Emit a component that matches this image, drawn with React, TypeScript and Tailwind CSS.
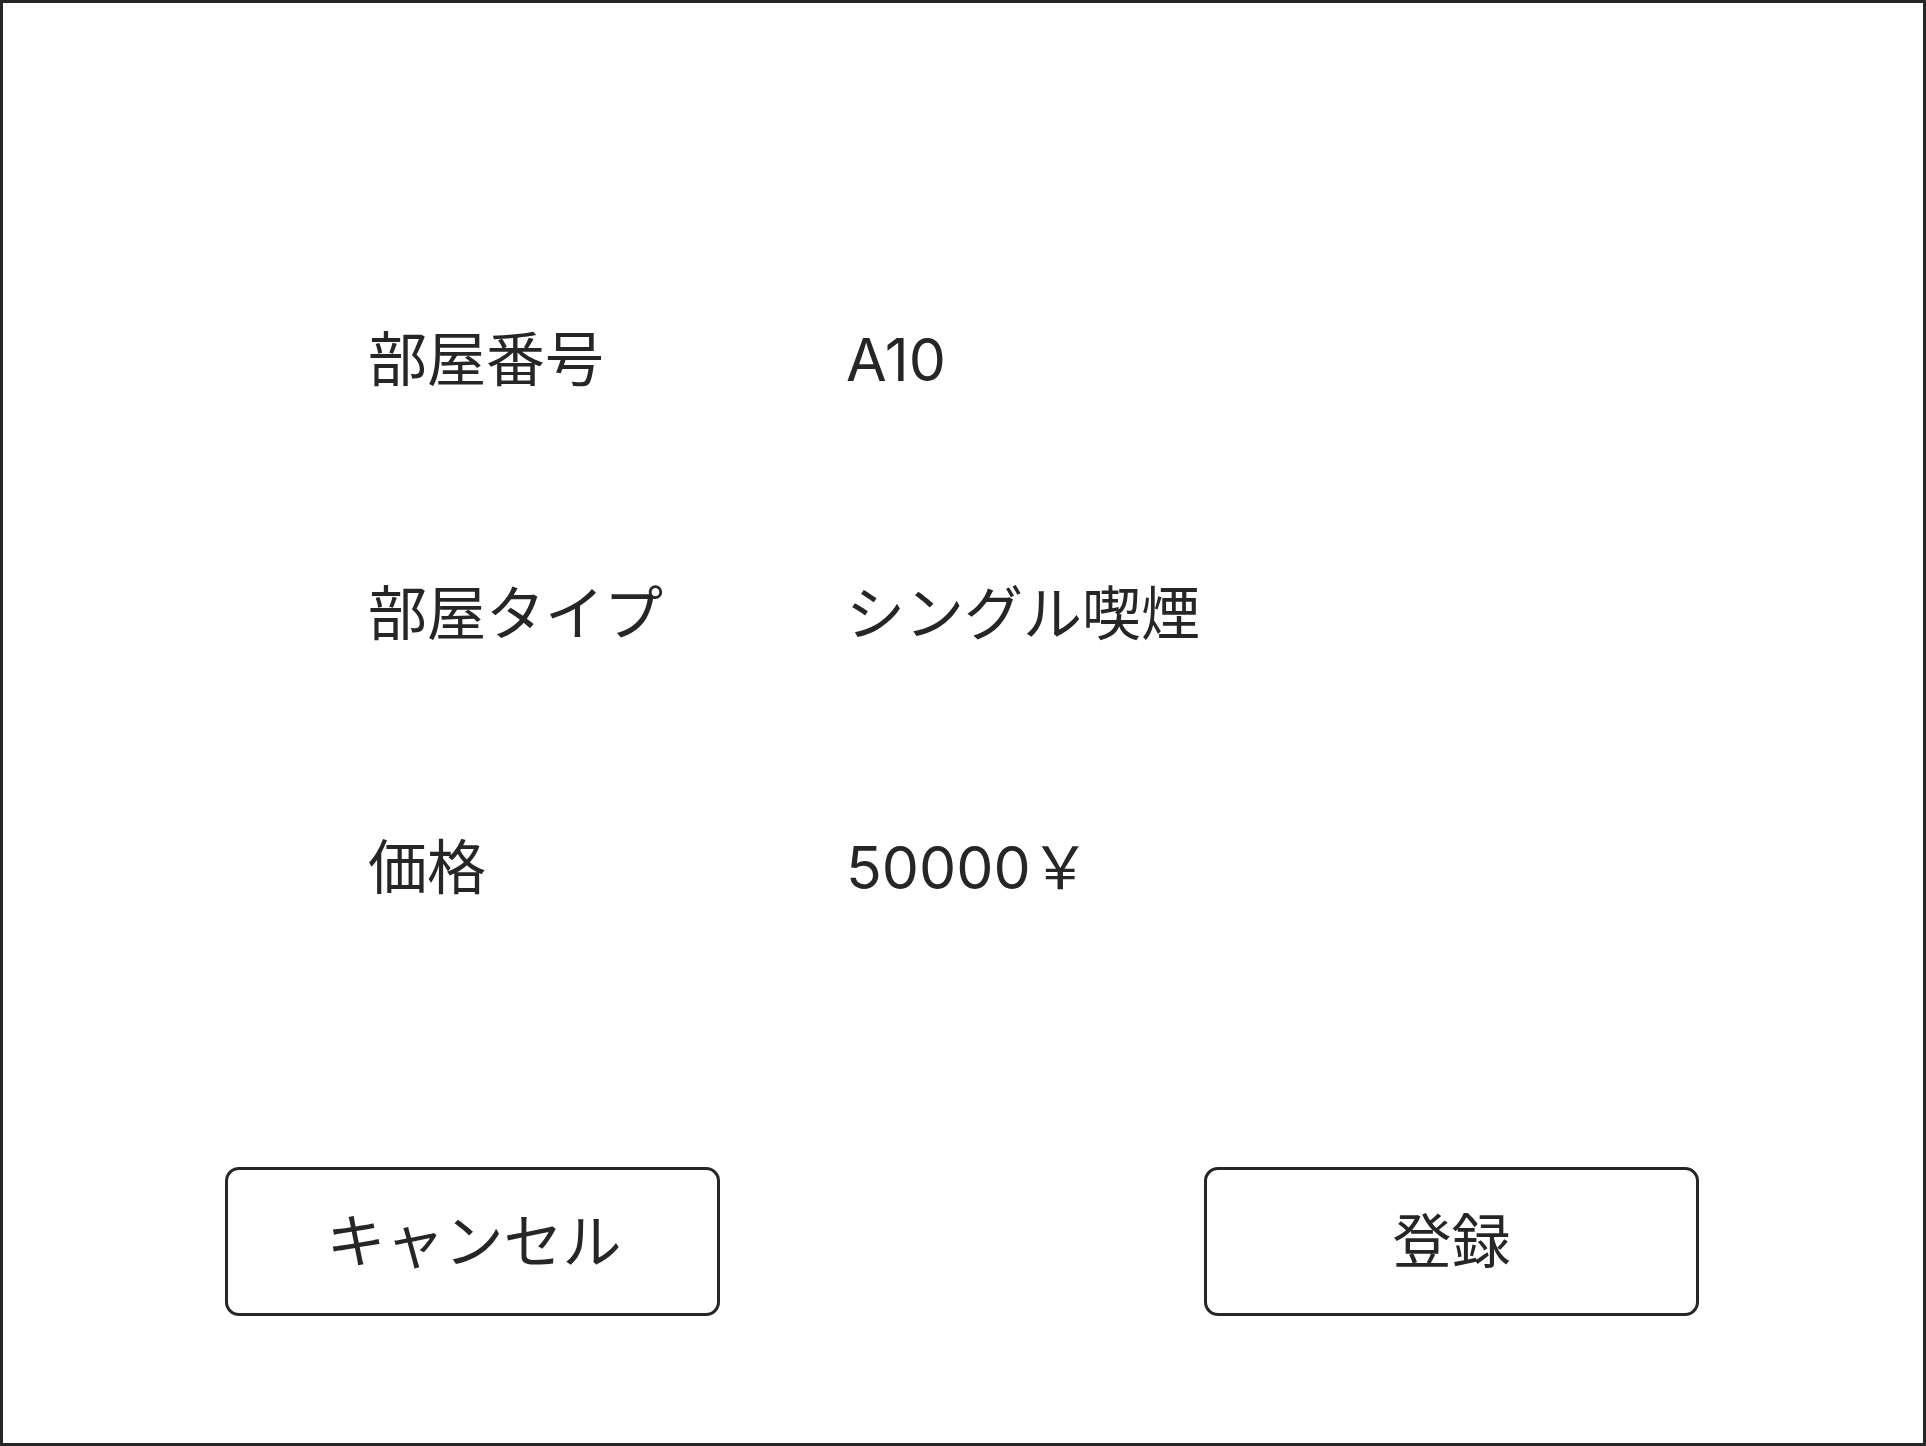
const ROWS = [
  { label: '部屋番号', value: 'A10' },
  { label: '部屋タイプ', value: 'シングル喫煙' },
  { label: '価格', value: '50000￥' },
];

export default function App() {
  return (
    <div
      className="w-[1926px] h-[1446px] border-[3px] border-[#262626] bg-white text-[#262626] flex flex-col"
      style={{ fontFamily: 'Inter, "Noto Sans CJK JP", sans-serif' }}
    >
      {/* Detail rows */}
      <div className="pt-[229px] pl-[365px] flex flex-col">
        {ROWS.map((r) => (
          <div key={r.label} className="h-[254px] flex items-center">
            <div className="w-[478px] text-[59px] leading-none">{r.label}</div>
            <div className="text-[59px] leading-none">{r.value}</div>
          </div>
        ))}
      </div>

      {/* Actions */}
      <div className="mt-[173px] pl-[222px] flex gap-[484px]">
        <button className="w-[495px] h-[149px] border-[3px] border-[#262626] rounded-[14px] text-[59px] leading-none flex items-center justify-center pl-[3px]">
          キャンセル
        </button>
        <button className="w-[495px] h-[149px] border-[3px] border-[#262626] rounded-[14px] text-[59px] leading-none flex items-center justify-center">
          登録
        </button>
      </div>
    </div>
  );
}
